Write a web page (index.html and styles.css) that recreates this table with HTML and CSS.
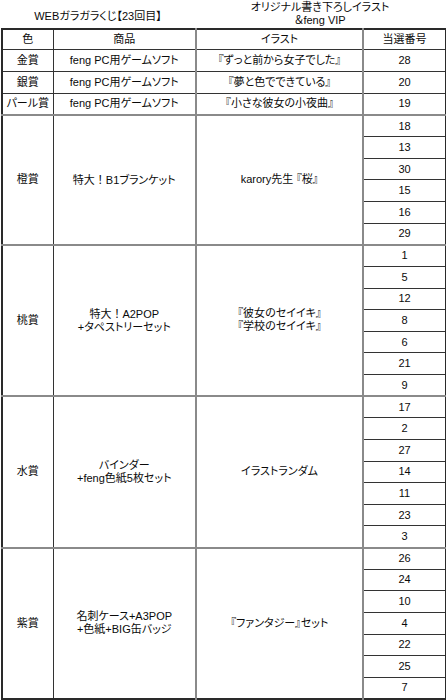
FILE: index.html
```html
<!DOCTYPE html>
<html lang="ja">
<head>
<meta charset="utf-8">
<link rel="stylesheet" href="styles.css">
</head>
<body>
<div class="page">
  <div class="titles">
    <div class="title-left">WEBガラガラくじ【23回目】</div>
    <div class="title-right">オリジナル書き下ろしイラスト<br>＆feng VIP</div>
  </div>
  <table class="tbl">
    <colgroup>
      <col class="c1"><col class="c2"><col class="c3"><col class="c4">
    </colgroup>
    <tr class="head">
      <td>色</td><td class="v2">商品</td><td class="v3">イラスト</td><td>当選番号</td>
    </tr>
    <tr class="single">
      <td>金賞</td><td class="v2">feng PC用ゲームソフト</td><td class="v3">『ずっと前から女子でした』</td><td>28</td>
    </tr>
    <tr class="single">
      <td>銀賞</td><td class="v2">feng PC用ゲームソフト</td><td class="v3">『夢と色でできている』</td><td>20</td>
    </tr>
    <tr class="single">
      <td>パール賞</td><td class="v2">feng PC用ゲームソフト</td><td class="v3">『小さな彼女の小夜曲』</td><td>19</td>
    </tr>

    <tr class="sub gtop">
      <td rowspan="6">橙賞</td><td rowspan="6" class="v2">特大<span class="fw">！</span>B1ブランケット</td><td rowspan="6" class="v3">karory先生 『桜』</td><td>18</td>
    </tr>
    <tr class="sub"><td>13</td></tr>
    <tr class="sub"><td>30</td></tr>
    <tr class="sub"><td>15</td></tr>
    <tr class="sub"><td>16</td></tr>
    <tr class="sub"><td>29</td></tr>

    <tr class="sub gtop">
      <td rowspan="7">桃賞</td><td rowspan="7" class="v2">特大<span class="fw">！</span>A2POP<br>+タペストリーセット</td><td rowspan="7" class="v3">『彼女のセイイキ』<br>『学校のセイイキ』</td><td>1</td>
    </tr>
    <tr class="sub"><td>5</td></tr>
    <tr class="sub"><td>12</td></tr>
    <tr class="sub"><td>8</td></tr>
    <tr class="sub"><td>6</td></tr>
    <tr class="sub"><td>21</td></tr>
    <tr class="sub"><td>9</td></tr>

    <tr class="sub gtop">
      <td rowspan="7">水賞</td><td rowspan="7" class="v2">バインダー<br>+feng色紙5枚セット</td><td rowspan="7" class="v3">イラストランダム</td><td>17</td>
    </tr>
    <tr class="sub"><td>2</td></tr>
    <tr class="sub"><td>27</td></tr>
    <tr class="sub"><td>14</td></tr>
    <tr class="sub"><td>11</td></tr>
    <tr class="sub"><td>23</td></tr>
    <tr class="sub"><td>3</td></tr>

    <tr class="sub gtop">
      <td rowspan="7">紫賞</td><td rowspan="7" class="v2">名刺ケース+A3POP<br>+色紙+BIG缶バッジ</td><td rowspan="7" class="v3">『ファンタジー』セット</td><td>26</td>
    </tr>
    <tr class="sub"><td>24</td></tr>
    <tr class="sub"><td>10</td></tr>
    <tr class="sub"><td>4</td></tr>
    <tr class="sub"><td>22</td></tr>
    <tr class="sub"><td>25</td></tr>
    <tr class="sub"><td>7</td></tr>
  </table>
</div>
</body>
</html>
```

FILE: styles.css
```css
html, body {
  margin: 0;
  padding: 0;
  background: #ffffff;
}

.page {
  width: 446px;
  padding-left: 1px;
  box-sizing: border-box;
  font-family: "Liberation Sans", "Noto Sans CJK JP", sans-serif;
  font-size: 11px;
  color: #0a0a0a;
  font-feature-settings: "palt";
}

.fw {
  font-feature-settings: normal;
  font-family: "Noto Sans CJK JP", sans-serif;
}

.titles {
  display: flex;
  height: 28px;
  width: 444px;
}

.title-left {
  width: 194px;
  display: flex;
  align-items: center;
  justify-content: center;
  padding-top: 2px;
  box-sizing: border-box;
}

.title-right {
  flex: 1;
  text-align: center;
  line-height: 12.5px;
  padding-top: 1px;
}

.tbl {
  border-collapse: collapse;
  table-layout: fixed;
  width: 444px;
  border: 2px solid #2a2a2a;
}

.c1 { width: 51px; }
.c2 { width: 143px; }
.c3 { width: 167px; }
.c4 { width: 83px; }

.tbl td {
  border: 1px solid #333;
  padding: 0;
  text-align: center;
  vertical-align: middle;
  line-height: 13px;
  white-space: nowrap;
}

.tbl td.v2 {
  border-left: 1px solid #444;
  border-right: 2px solid #8a8a8a;
}

.tbl td.v3 {
  border-right: 2px solid #8a8a8a;
}

.head { height: 20px; }
.single { height: 22px; }
.sub { height: 21.63px; }

.tbl tr.gtop td {
  border-top: 2px solid #8a8a8a;
}
```
